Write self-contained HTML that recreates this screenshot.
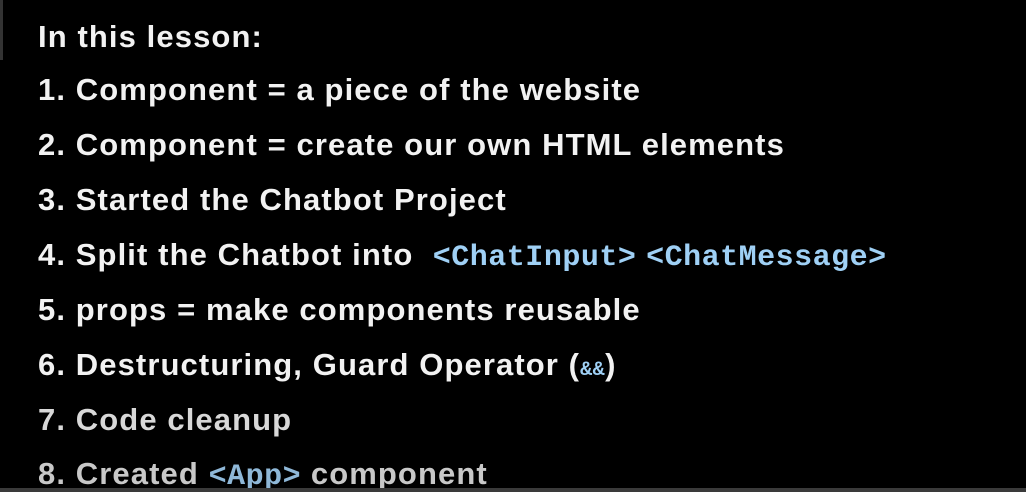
<!DOCTYPE html>
<html><head><style>
html,body{margin:0;padding:0;background:#000;width:1026px;height:492px;overflow:hidden;}
body{position:relative;font-family:"Liberation Sans",sans-serif;font-weight:bold;color:#f2f2f2;}
.l{position:absolute;left:38px;font-size:31px;letter-spacing:1.1px;white-space:nowrap;line-height:34px;}
code{font-family:"Liberation Mono",monospace;font-size:30px;color:#9fd0f5;font-weight:bold;letter-spacing:0.5px;}
.edge{position:absolute;left:0;top:0;width:3px;height:60px;background:#333;}
.bot{position:absolute;left:0;bottom:0;width:1026px;height:4px;background:#3a3a3a;}
</style></head><body>
<div class="edge"></div>
<div class="l" style="top:20px">In this lesson:</div>
<div class="l" style="top:73px">1. Component = a piece of the website</div>
<div class="l" style="top:128px">2. Component = create our own HTML elements</div>
<div class="l" style="top:183px">3. Started the Chatbot Project</div>
<div class="l" style="top:238px">4. Split the Chatbot into &nbsp;<code>&lt;ChatInput&gt;</code> <code>&lt;ChatMessage&gt;</code></div>
<div class="l" style="top:293px">5. props = make components reusable</div>
<div class="l" style="top:348px">6. Destructuring, Guard Operator (<code style="font-size:20px">&amp;&amp;</code>)</div>
<div class="l" style="top:403px;color:#d8d8d8">7. Code cleanup</div>
<div class="l" style="top:457px;color:#c8c8c8">8. Created <code style="color:#8fb8d8">&lt;App&gt;</code> component</div>
<div class="bot"></div>
</body></html>
